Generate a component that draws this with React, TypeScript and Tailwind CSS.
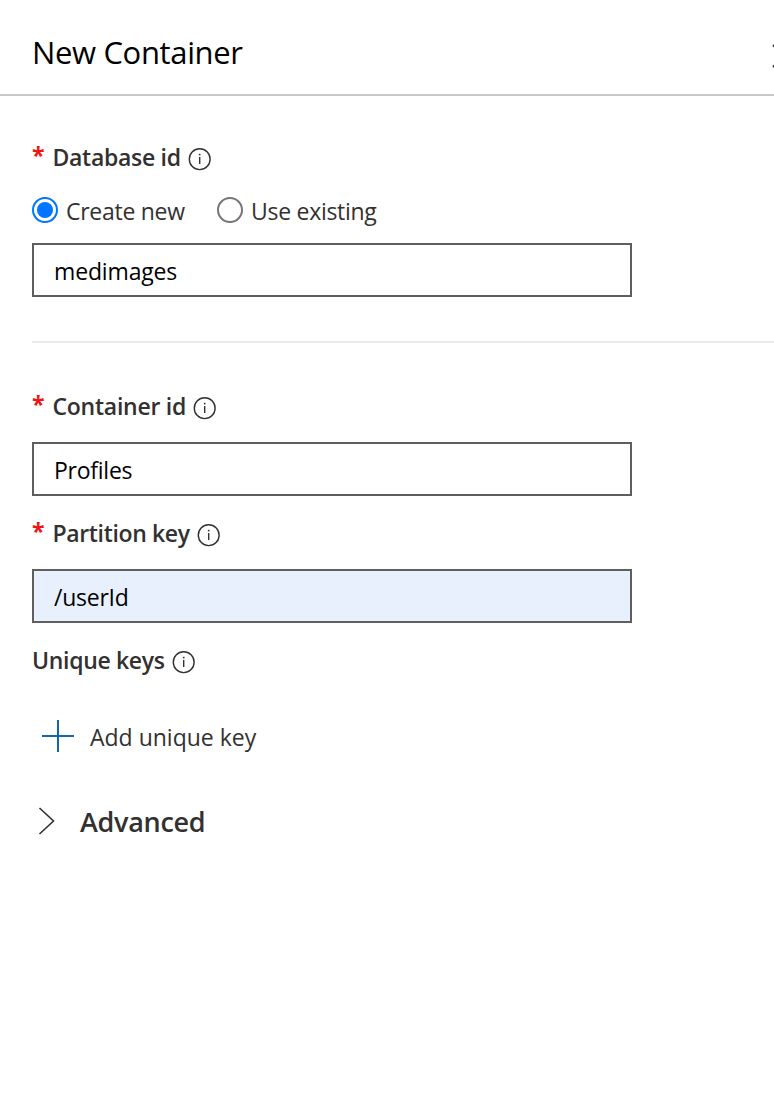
import React, { useState } from "react";

function InfoIcon() {
  return (
    <svg width="24" height="24" viewBox="0 0 24 24" fill="none" className="relative top-[1px] shrink-0" aria-hidden="true">
      <circle cx="11.7" cy="12.2" r="10.4" stroke="#323130" strokeWidth="1.4" />
      <path d="M11.7 10v7" stroke="#323130" strokeWidth="1.4" />
      <rect x="10.9" y="6.8" width="1.6" height="1.6" fill="#323130" />
    </svg>
  );
}

function Label({ text, required, className }: { text: string; required?: boolean; className: string }) {
  return (
    <div className="flex h-12 items-center">
      {required && <span className="w-[20.5px] pb-[7px] text-[23px] leading-8 font-bold text-[#f01414]">*</span>}
      <span className={"mr-[7px] whitespace-nowrap pb-0.5 text-[23px] leading-8 font-semibold text-[#323130] " + className}>{text}</span>
      <InfoIcon />
    </div>
  );
}

function Field({ value, className }: { value: string; className: string }) {
  const [text, setText] = useState(value);
  return (
    <input
      value={text}
      onChange={(e) => setText(e.target.value)}
      className={"block h-[54px] w-[600px] border-2 border-[#605e5c] pt-px pl-5 text-[23px] leading-8 text-black outline-none " + className}
    />
  );
}

function Radio({ checked }: { checked?: boolean }) {
  return (
    <svg width="26" height="26" viewBox="0 0 26 26" fill="none" className="shrink-0" aria-hidden="true">
      <circle cx="13" cy="13" r="12" stroke={checked ? "#0075ff" : "#767676"} strokeWidth="2" />
      {checked && <circle cx="13" cy="13" r="8" fill="#0075ff" />}
    </svg>
  );
}

export default function App() {
  return (
    <div className="h-[1112px] w-full overflow-hidden bg-white font-['Open_Sans','Noto_Sans',sans-serif]">
      <header className="flex h-24 items-center justify-between overflow-hidden border-b-2 border-[#c8c8c8] pl-8">
        <h1 className="whitespace-nowrap pt-2.5 text-[31px] leading-10 tracking-[-0.35px] text-black">New Container</h1>
        <svg width="24" height="24" viewBox="0 0 24 24" className="-mr-[22px] mt-[17px] shrink-0" aria-hidden="true">
          <path d="M1 1l22 22M23 1L1 23" stroke="#323130" strokeWidth="2" />
        </svg>
      </header>
      <main className="pt-[38px] pl-8">
        <Label text="Database id" required className="tracking-[-0.3px]" />
        <div className="flex h-14 items-center text-[23px] leading-8 tracking-[-0.28px] text-[#323130]">
          <Radio checked />
          <span className="mr-8 ml-2 w-[119px] whitespace-nowrap pt-0.5">Create new</span>
          <Radio />
          <span className="ml-2 whitespace-nowrap pt-0.5">Use existing</span>
        </div>
        <div className="mt-[5px]">
          <Field value="medimages" className="bg-white tracking-[-0.15px]" />
        </div>
        <div className="mt-11 h-0.5 bg-[#eaeaea]" />
        <div className="mt-10">
          <Label text="Container id" required className="tracking-[-0.25px]" />
        </div>
        <div className="mt-[11px]">
          <Field value="Profiles" className="bg-white tracking-[-0.25px]" />
        </div>
        <div className="mt-3.5">
          <Label text="Partition key" required className="tracking-[-0.35px]" />
        </div>
        <div className="mt-[11px]">
          <Field value="/userId" className="bg-[#e8f0fe] tracking-[-0.25px]" />
        </div>
        <div className="mt-3.5">
          <Label text="Unique keys" className="tracking-[-0.32px]" />
        </div>
        <button className="mt-7 flex h-12 items-center pl-[10px] text-[23px] leading-8 text-[#323130]">
          <svg width="32" height="32" viewBox="0 0 32 32" className="relative -top-px shrink-0" aria-hidden="true">
            <path d="M0 16h32M16 0v32" stroke="#1166ac" strokeWidth="2" />
          </svg>
          <span className="ml-4 whitespace-nowrap">Add unique key</span>
        </button>
        <button className="mt-[37px] flex h-12 items-center pl-[6px] text-[27px] leading-9 font-semibold tracking-[-0.3px] text-[#323130]">
          <svg width="18" height="28" viewBox="0 0 18 28" fill="none" className="relative -top-px shrink-0" aria-hidden="true">
            <path d="M1.5 1l14 13l-14 13" stroke="#323130" strokeWidth="1.6" />
          </svg>
          <span className="ml-6 whitespace-nowrap">Advanced</span>
        </button>
      </main>
    </div>
  );
}
